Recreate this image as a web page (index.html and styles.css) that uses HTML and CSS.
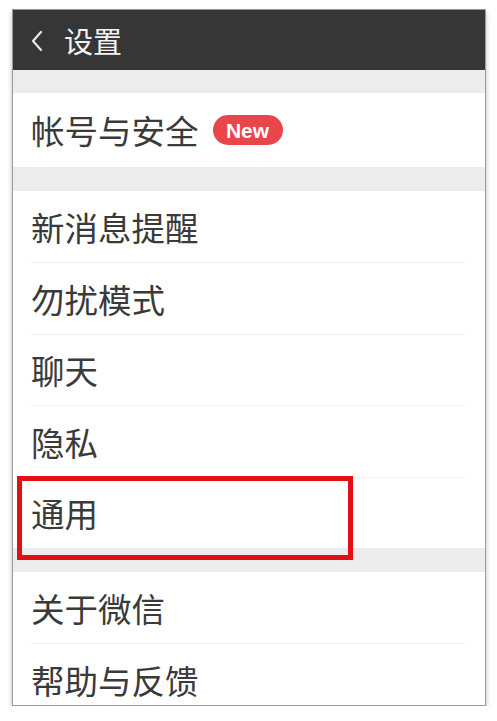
FILE: index.html
```html
<!DOCTYPE html>
<html>
<head>
    <title>设置</title>
    <link rel="stylesheet" href="styles.css">
</head>
<body>
    <div class="phone">
        <div class="topbar">
            <svg class="back" width="16" height="24" viewBox="0 0 16 24">
                <path d="M12 3 L4 12 L12 21" fill="none" stroke="#e8e8e8" stroke-width="2.2" stroke-linecap="round" stroke-linejoin="round"/>
            </svg>
            <span class="title">设置</span>
        </div>

        <div class="gap"></div>
        <div class="group">
            <div class="row row-tall">帐号与安全 <span class="badge">New</span></div>
        </div>

        <div class="gap"></div>
        <div class="group">
            <div class="row">新消息提醒</div>
            <div class="row">勿扰模式</div>
            <div class="row">聊天</div>
            <div class="row">隐私</div>
            <div class="row marked">通用<span class="highlight"></span></div>
        </div>

        <div class="gap"></div>
        <div class="group">
            <div class="row">关于微信</div>
            <div class="row">帮助与反馈</div>
        </div>
    </div>
</body>
</html>
```

FILE: styles.css
```css
body {
    margin: 0;
    background: #fff;
    font-family: "Noto Sans CJK SC", "Noto Sans", sans-serif;
}
.phone {
    margin: 9px 0 0 12px;
    width: 472px;
    height: 695px;
    border: 1px solid #9a9a9a;
    box-shadow: 0 3px 5px rgba(0, 0, 0, 0.25);
    overflow: hidden;
    background: #fff;
}
.topbar {
    height: 60px;
    background: #363636;
    display: flex;
    align-items: center;
    padding-left: 16px;
}
.back {
    margin-top: 1px;
}
.title {
    color: #f2f2f2;
    font-size: 29px;
    margin-left: 19px;
    line-height: 1;
}
.gap {
    height: 23px;
    background: #ececec;
}
.group + .gap {
    height: 24px;
}
.group {
    background: #fff;
}
.row {
    position: relative;
    height: 71.4px;
    box-sizing: border-box;
    margin: 0 20px 0 18px;
    display: flex;
    align-items: center;
    font-size: 33.5px;
    color: #3a3a3a;
    line-height: 1;
}
.row + .row {
    border-top: 1px solid #efefef;
}
.row-tall {
    height: 74px;
}
.badge {
    display: inline-flex;
    align-items: center;
    justify-content: center;
    width: 70px;
    height: 30px;
    margin-left: 14px;
    border-radius: 15px;
    background: #e8464a;
    color: #fff;
    font-family: "Liberation Sans", Arial, sans-serif;
    font-weight: bold;
    font-size: 21px;
}
.marked {
    z-index: 2;
}
.highlight {
    position: absolute;
    left: -14px;
    top: -2px;
    width: 336px;
    height: 84px;
    box-sizing: border-box;
    border: 5px solid #e40f12;
}
```
